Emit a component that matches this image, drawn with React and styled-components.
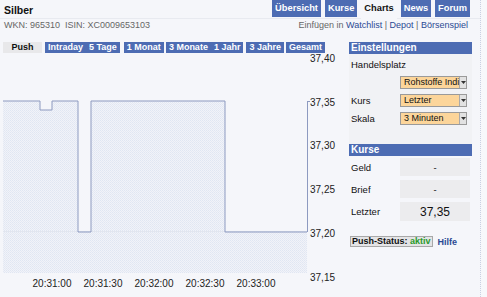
import React from "react";
import styled, { createGlobalStyle } from "styled-components";

const GlobalStyle = createGlobalStyle`
  body {
    margin: 0;
    background: #f7f8fb;
    font-family: "Liberation Sans", Arial, sans-serif;
  }
`;

const BLUE = "#4d6cb3";

const topTabs = ["Übersicht", "Kurse", "Charts", "News", "Forum"];
const ranges = [
  { label: "Intraday", gap: 3 },
  { label: "5 Tage", gap: 0 },
  { label: "1 Monat", gap: 4 },
  { label: "3 Monate", gap: 2 },
  { label: "1 Jahr", gap: 0 },
  { label: "3 Jahre", gap: 3 },
  { label: "Gesamt", gap: 2 },
];

const yLabels = ["37,40", "37,35", "37,30", "37,25", "37,20", "37,15"];
const xLabels = [
  { t: "20:31:00", x: 52 },
  { t: "20:31:30", x: 103 },
  { t: "20:32:00", x: 154 },
  { t: "20:32:30", x: 205 },
  { t: "20:33:00", x: 256 },
];

const linePts =
  "3,101 40,101 40,110 52,110 52,101 78,101 78,232 91,232 91,101 225,101 225,232 307,232";

const PriceChart = () => (
  <ChartSvg width="340" height="244" viewBox="0 53 340 244">
    <defs>
      <pattern id="dither" width="2" height="2" patternUnits="userSpaceOnUse">
        <rect width="2" height="2" fill="#f1f3f9" />
        <rect width="1" height="1" fill="#e0e6f2" />
        <rect x="1" y="1" width="1" height="1" fill="#e5e9f3" />
      </pattern>
    </defs>
    <polygon points={`${linePts} 307,273 3,273`} fill="url(#dither)" />
    <line x1="3" y1="231.5" x2="307" y2="231.5" stroke="#e2e6ef" />
    <polyline points={linePts} fill="none" stroke="#8d9ac0" strokeWidth="1" />
    <line x1="307.5" y1="101" x2="307.5" y2="232" stroke="#8d9ac0" />
    <line x1="307" y1="101.5" x2="310" y2="101.5" stroke="#8d9ac0" />
    {yLabels.map((l, i) => (
      <AxisText key={l} x="310" y={61.8 + i * 43.8}>
        {l}
      </AxisText>
    ))}
    {xLabels.map((l) => (
      <AxisText key={l.t} x={l.x} y="286.5" textAnchor="middle">
        {l.t}
      </AxisText>
    ))}
  </ChartSvg>
);

const Select = ({ value }) => (
  <SelectBox>
    <SelectValue>{value}</SelectValue>
    <SelectArrow>
      <svg width="5" height="3" viewBox="0 0 5 3">
        <path d="M0 0H5L2.5 3Z" fill="#333" />
      </svg>
    </SelectArrow>
  </SelectBox>
);

const App = () => (
  <>
    <GlobalStyle />
    <Page>
      <Header>
        <Title>Silber</Title>
        <Tabs>
          {topTabs.map((t) => (
            <Tab key={t} $active={t === "Charts"}>
              {t}
            </Tab>
          ))}
        </Tabs>
      </Header>
      <InfoRow>
        <span>WKN: 965310&nbsp;&nbsp;ISIN: XC0009653103</span>
        <span>
          Einfügen in <LinkText>Watchlist</LinkText> | <LinkText>Depot</LinkText> |{" "}
          <LinkText>Börsenspiel</LinkText>
        </span>
      </InfoRow>
      <Main>
        <ChartColumn>
          <RangeBar>
            <PushTab>Push</PushTab>
            {ranges.map((r) => (
              <RangeTab key={r.label} $gap={r.gap}>
                {r.label}
              </RangeTab>
            ))}
          </RangeBar>
          <PriceChart />
        </ChartColumn>
        <SidePanel>
          <BarTitle>Einstellungen</BarTitle>
          <SettingsBody>
            <PlainLabel>Handelsplatz</PlainLabel>
            <FormRow>
              <span />
              <Select value="Rohstoffe Indi" />
            </FormRow>
            <FormRow>
              <span>Kurs</span>
              <Select value="Letzter" />
            </FormRow>
            <FormRow>
              <span>Skala</span>
              <Select value="3 Minuten" />
            </FormRow>
          </SettingsBody>
          <BarTitle>Kurse</BarTitle>
          <QuoteList>
            <QuoteRow>
              <span>Geld</span>
              <QuoteValue>-</QuoteValue>
            </QuoteRow>
            <QuoteRow>
              <span>Brief</span>
              <QuoteValue>-</QuoteValue>
            </QuoteRow>
            <QuoteRow $tall>
              <span>Letzter</span>
              <QuoteValue $big>37,35</QuoteValue>
            </QuoteRow>
          </QuoteList>
          <StatusLine>
            <StatusBox>
              Push-Status: <Active>aktiv</Active>
            </StatusBox>
            <HelpLink>Hilfe</HelpLink>
          </StatusLine>
        </SidePanel>
      </Main>
    </Page>
  </>
);

const Page = styled.div`
  width: 481px;
  height: 297px;
  box-sizing: border-box;
  border-right: 1px dotted #c9d0e2;
  background: #f5f6fa;
  font-size: 9.5px;
  color: #111;
  overflow: hidden;
`;

const Header = styled.div`
  display: flex;
  justify-content: space-between;
  align-items: flex-start;
  height: 18px;
  padding-left: 4px;
  padding-right: 10px;
  border-bottom: 1px solid #e8eaf0;
`;

const Title = styled.div`
  font-size: 10.5px;
  font-weight: bold;
  padding-top: 4px;
`;

const Tabs = styled.div`
  display: flex;
  gap: 4px;
`;

const Tab = styled.div`
  height: ${(p) => (p.$active ? "19px" : "17px")};
  line-height: 17px;
  padding: 0 3px;
  font-weight: bold;
  font-size: 9.3px;
  color: ${(p) => (p.$active ? "#111" : "#fff")};
  background: ${(p) => (p.$active ? "#f5f6fa" : BLUE)};
`;

const InfoRow = styled.div`
  display: flex;
  justify-content: space-between;
  padding: 1px 12px 0 4px;
  line-height: 11px;
  font-size: 9px;
  color: #666;
`;

const LinkText = styled.span`
  color: #2b4a94;
`;

const Main = styled.div`
  display: flex;
  margin-top: 11px;
`;

const ChartColumn = styled.div`
  width: 340px;
  display: flex;
  flex-direction: column;
`;

const RangeBar = styled.div`
  display: flex;
  height: 11px;
  padding-left: 3px;
  font-size: 9px;
`;

const PushTab = styled.div`
  width: 39px;
  text-align: center;
  line-height: 11px;
  font-weight: bold;
  background: #e8e8ea;
`;

const RangeTab = styled.div`
  margin-left: ${(p) => p.$gap}px;
  padding: 0 3px;
  line-height: 11px;
  font-weight: bold;
  color: #fff;
  background: ${BLUE};
`;

const ChartSvg = styled.svg`
  display: block;
`;

const AxisText = styled.text`
  font-family: "Liberation Sans", Arial, sans-serif;
  font-size: 10px;
  fill: #222;
`;

const SidePanel = styled.div`
  width: 123px;
  margin-left: 9px;
  display: flex;
  flex-direction: column;
`;

const BarTitle = styled.div`
  height: 12px;
  line-height: 12px;
  padding-left: 2px;
  font-size: 10px;
  font-weight: bold;
  color: #fff;
  background: ${BLUE};
`;

const SettingsBody = styled.div`
  display: flex;
  flex-direction: column;
  gap: 4px;
  padding: 5px 0 19px 2px;
  background: #f1f2f5;
`;

const PlainLabel = styled.div`
  line-height: 12px;
`;

const FormRow = styled.div`
  display: grid;
  grid-template-columns: 49px 67px;
  align-items: center;
  height: 14px;
`;

const SelectBox = styled.div`
  display: flex;
  height: 13px;
  box-sizing: border-box;
  border: 1px solid #9a9a9a;
  background: #fcd59a;
`;

const SelectValue = styled.div`
  flex: 1;
  white-space: nowrap;
  padding-left: 3px;
  line-height: 11px;
  font-size: 9px;
`;

const SelectArrow = styled.div`
  width: 6px;
  display: flex;
  align-items: center;
  justify-content: center;
  background: #e2e2e2;
  border-left: 1px solid #aaa;
`;

const QuoteList = styled.div`
  display: flex;
  flex-direction: column;
  gap: 4px;
  padding: 2px 0 0 2px;
`;

const QuoteRow = styled.div`
  display: grid;
  grid-template-columns: 49px 70px;
  align-items: center;
  height: ${(p) => (p.$tall ? "19px" : "18px")};
`;

const QuoteValue = styled.div`
  height: 100%;
  display: flex;
  align-items: center;
  justify-content: center;
  font-size: ${(p) => (p.$big ? "12px" : "9.5px")};
  background: #ececee;
`;

const StatusLine = styled.div`
  display: flex;
  align-items: center;
  gap: 5px;
  margin-top: 15px;
  padding-left: 1px;
  font-size: 9px;
`;

const StatusBox = styled.div`
  font-weight: bold;
  line-height: 9px;
  padding: 0 1px;
  border: 1px solid #a8a8a8;
  background: #e4e4e6;
`;

const Active = styled.span`
  color: #2a9a2a;
`;

const HelpLink = styled.span`
  font-weight: bold;
  color: #2b4a94;
`;

export default App;
